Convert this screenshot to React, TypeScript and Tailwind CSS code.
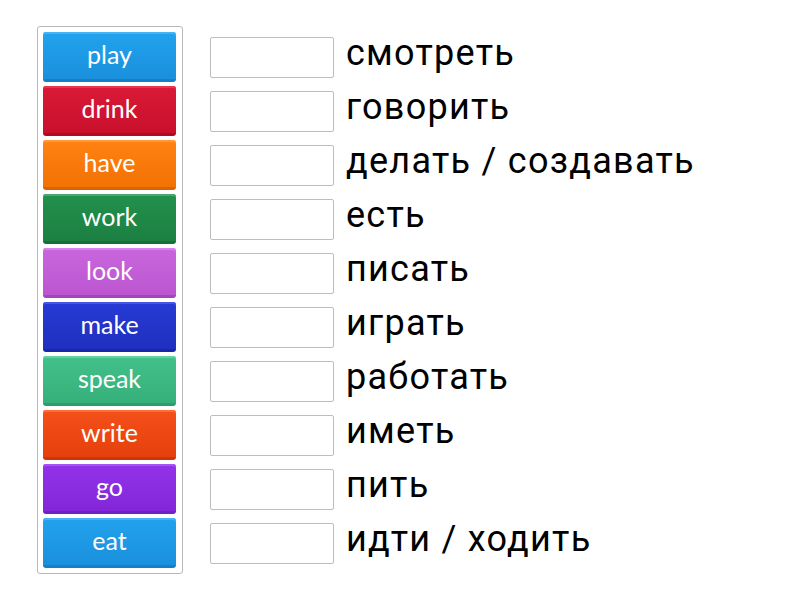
const words = [
  { en: 'play', bg: 'bg-[linear-gradient(#22a2ee,#1a90dc)]', edge: 'border-[#1580c8]', hi: 'shadow-[inset_0_2px_0_#47b3f5]' },
  { en: 'drink', bg: 'bg-[linear-gradient(#da1a36,#c8102c)]', edge: 'border-[#b00a24]', hi: 'shadow-[inset_0_2px_0_#e5384f]' },
  { en: 'have', bg: 'bg-[linear-gradient(#ff8212,#f27204)]', edge: 'border-[#dc6400]', hi: 'shadow-[inset_0_2px_0_#ff9a3a]' },
  { en: 'work', bg: 'bg-[linear-gradient(#23914d,#1b8042)]', edge: 'border-[#166f39]', hi: 'shadow-[inset_0_2px_0_#4aa86c]' },
  { en: 'look', bg: 'bg-[linear-gradient(#c966dd,#bb56d0)]', edge: 'border-[#a446bb]', hi: 'shadow-[inset_0_2px_0_#d885ea]' },
  { en: 'make', bg: 'bg-[linear-gradient(#273ad4,#1f30c0)]', edge: 'border-[#1a28a8]', hi: 'shadow-[inset_0_2px_0_#4656e0]' },
  { en: 'speak', bg: 'bg-[linear-gradient(#43c18a,#36b07a)]', edge: 'border-[#2e9c6b]', hi: 'shadow-[inset_0_2px_0_#66d19f]' },
  { en: 'write', bg: 'bg-[linear-gradient(#f4501a,#e6400c)]', edge: 'border-[#cc360a]', hi: 'shadow-[inset_0_2px_0_#ff6d38]' },
  { en: 'go', bg: 'bg-[linear-gradient(#9233ea,#8326d8)]', edge: 'border-[#7120c2]', hi: 'shadow-[inset_0_2px_0_#a755f2]' },
  { en: 'eat', bg: 'bg-[linear-gradient(#22a2ee,#1a90dc)]', edge: 'border-[#1580c8]', hi: 'shadow-[inset_0_2px_0_#47b3f5]' },
]

const targets = [
  'смотреть',
  'говорить',
  'делать / создавать',
  'есть',
  'писать',
  'играть',
  'работать',
  'иметь',
  'пить',
  'идти / ходить',
]

export default function App() {
  return (
    <div className="w-[800px] h-[600px] bg-white flex pl-[37px] pt-[26px]">
      <div className="w-[146px] h-[548px] border border-[#b8b8b8] rounded-[3px] pl-[5px] pt-[5px] flex flex-col gap-[4px]">
        {words.map(w => (
          <div
            key={w.en}
            className={`w-[133px] h-[50px] rounded-[3px] border-b-[3px] flex items-center justify-center text-white text-[25px] pb-[1px] ${w.bg} ${w.edge} ${w.hi}`}
            style={{ fontFamily: 'Lato, "Open Sans", sans-serif' }}
          >
            {w.en}
          </div>
        ))}
      </div>
      <div className="ml-[27px] pt-[6px] flex flex-col gap-[4px]">
        {targets.map(t => (
          <div key={t} className="h-[50px] flex items-center">
            <div className="w-[124px] h-[41px] border border-[#bdbdbd] rounded-[2px] bg-white" />
            <span
              className="ml-[12px] text-[36px] tracking-[0.035em] text-black leading-none pb-[8px]"
              style={{ fontFamily: 'Roboto, "Noto Sans", sans-serif' }}
            >
              {t}
            </span>
          </div>
        ))}
      </div>
    </div>
  )
}
